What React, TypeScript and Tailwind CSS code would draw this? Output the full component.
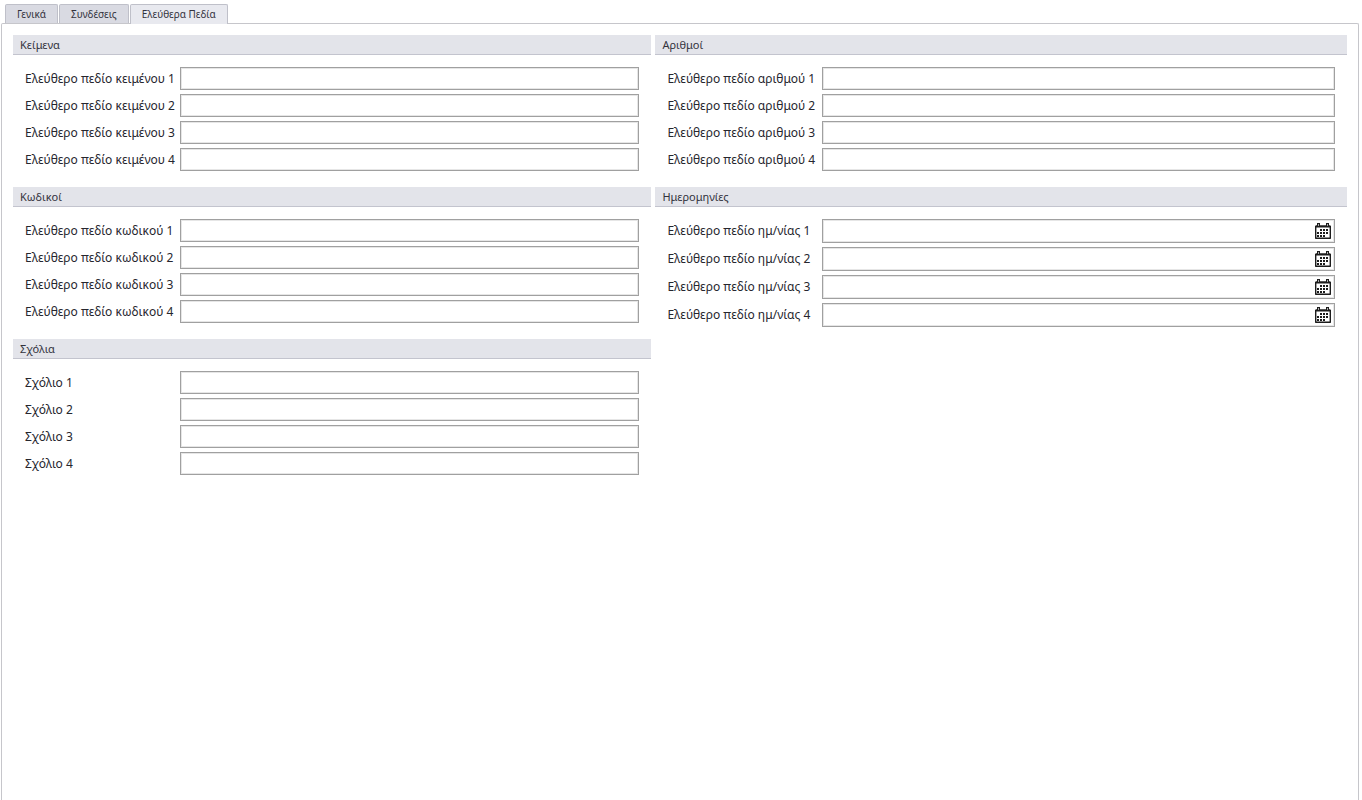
import React, { useState } from 'react';

type FieldGroupProps = {
  id: string;
  title: string;
  labels: string[];
  date?: boolean;
};

const tabs = ['Γενικά', 'Συνδέσεις', 'Ελεύθερα Πεδία'];

const numbered = (label: string) => [1, 2, 3, 4].map((n) => `${label} ${n}`);

const CalendarIcon: React.FC = () => (
  <svg className="h-4 w-4" viewBox="0 0 16 16" fill="none" aria-hidden="true">
    <path d="M0.7 3.2h14.6v12.1H0.7z" stroke="#1c1c1c" strokeWidth="1.4" strokeLinejoin="round" />
    <path d="M1 2.5h14v2H1z" fill="#1c1c1c" />
    <path d="M2 0h3v4H2zM11 0h3v4h-3z" fill="#1c1c1c" />
    <path d="M3 1h1v2H3zM12 1h1v2h-1z" fill="#aaa" />
    <path
      d="M5 6h2v2H5zM8 6h2v2H8zM11 6h2v2h-2zM2 9h2v2H2zM5 9h2v2H5zM8 9h2v2H8zM11 9h2v2h-2zM2 12h2v2H2zM5 12h2v2H5zM8 12h2v2H8z"
      fill="#1c1c1c"
    />
  </svg>
);

const FieldGroup: React.FC<FieldGroupProps> = ({ id, title, labels, date }) => (
  <section>
    <h2 className="h-5 border-b border-[#c3c4ce] bg-[#e3e4ea] px-[7px] text-[11px] leading-[19px] text-[#33333d]">
      {title}
    </h2>
    <div className="flex flex-col gap-1 px-3 pt-3 pb-4">
      {labels.map((label, index) => {
        const fieldId = `${id}-${index + 1}`;
        return (
          <div key={fieldId} className="flex items-center">
            <label htmlFor={fieldId} className="w-[155px] shrink-0 whitespace-nowrap text-[12px] leading-5 text-[#26262e]">
              {label}
            </label>
            {date ? (
              <div className="flex h-6 min-w-0 flex-1 items-center border border-[#a0a0a0] bg-white pr-[3px] shadow-[inset_0_0_0_1px_#e6e6e6]">
                <input id={fieldId} type="text" className="h-full min-w-0 flex-1 px-1 text-[12px] outline-none" />
                <button type="button" aria-label={`Ημερολόγιο: ${label}`}>
                  <CalendarIcon />
                </button>
              </div>
            ) : (
              <input
                id={fieldId}
                type="text"
                className="h-[23px] min-w-0 flex-1 border border-[#a0a0a0] bg-white px-1 text-[12px] shadow-[inset_0_0_0_1px_#e6e6e6] outline-none"
              />
            )}
          </div>
        );
      })}
    </div>
  </section>
);

const App: React.FC = () => {
  const [active, setActive] = useState(2);

  return (
    <div className="flex min-h-screen flex-col bg-white pt-1 pr-[3px] pl-px font-['Noto_Sans','Open_Sans',sans-serif]">
      {/* Tabs */}
      <div role="tablist" className="flex gap-px px-1">
        {tabs.map((tab, index) => (
          <button
            key={tab}
            type="button"
            role="tab"
            aria-selected={active === index}
            onClick={() => setActive(index)}
            className={`h-5 rounded-t-xs border border-b-0 border-[#bfc0c9] px-[11px] text-[10px] leading-[19px] text-[#33333d] ${
              active === index ? 'z-10 bg-[#e8e9ef]' : 'bg-[#d9dae2]'
            }`}
          >
            {tab}
          </button>
        ))}
      </div>

      {/* Free fields */}
      <main
        role="tabpanel"
        className="-mt-px grid flex-1 grid-cols-[48fr_52fr] content-start gap-x-1 rounded-t-xs border border-b-0 border-[#c6c6cb] px-[11px] pt-[11px]"
      >
        <div>
          <FieldGroup id="text" title="Κείμενα" labels={numbered('Ελεύθερο πεδίο κειμένου')} />
          <FieldGroup id="code" title="Κωδικοί" labels={numbered('Ελεύθερο πεδίο κωδικού')} />
          <FieldGroup id="comment" title="Σχόλια" labels={numbered('Σχόλιο')} />
        </div>
        <div>
          <FieldGroup id="number" title="Αριθμοί" labels={numbered('Ελεύθερο πεδίο αριθμού')} />
          <FieldGroup id="date" title="Ημερομηνίες" labels={numbered('Ελεύθερο πεδίο ημ/νίας')} date />
        </div>
      </main>
    </div>
  );
};

export default App;
